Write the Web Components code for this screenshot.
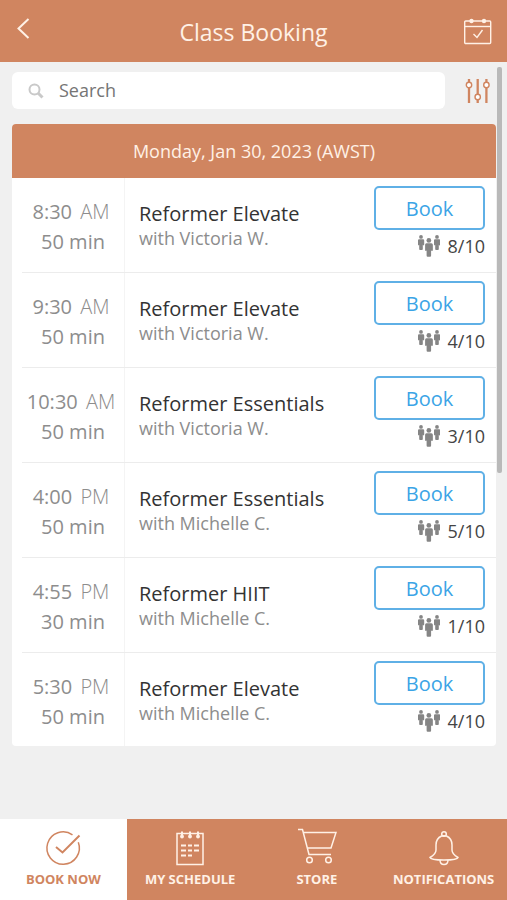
<!DOCTYPE html>
<html lang="en">
<head>
<meta charset="utf-8">
<meta name="viewport" content="width=device-width, initial-scale=1">
<title>Class Booking</title>
<style>
  html, body { margin: 0; }
  body {
    --brand: #d08560;
    --on-brand: #fff1e6;
    --blue: #3ba4e6;
    --grey: #8d8d8d;
    --line: #ececec;
    font-family: "Open Sans", "Noto Sans", sans-serif;
    font-size: 18px;
    color: #333;
    background: #f0f0f0;
  }
</style>
</head>
<body>
<booking-app></booking-app>

<script>
const define = (name, html, setup) => {
  const template = document.createElement('template');
  template.innerHTML = html;
  customElements.define(name, class extends HTMLElement {
    constructor() {
      super();
      this.attachShadow({ mode: 'open' }).append(template.content.cloneNode(true));
    }
    connectedCallback() {
      if (setup) setup(this, this.shadowRoot);
    }
  });
};

define('app-header', `
<style>
  :host { display: block; background: var(--brand); color: var(--on-brand); }
  header { display: grid; grid-template-columns: 56px 1fr 56px; align-items: center; height: 62px; }
  h1 { margin: 0; padding-top: 2px; font-size: 23px; line-height: 32px; font-weight: 400; text-align: center; }
  button { display: flex; align-items: center; height: 58px; padding: 0 14px; border: 0; background: none; color: inherit; }
  .end { justify-content: flex-end; height: 62px; }
  header { align-items: start; }
  h1 { align-self: center; }
  svg { display: block; flex: none; fill: none; stroke: currentColor; }
</style>
<header>
  <button type="button" aria-label="Back">
    <svg width="18" height="24" viewBox="0 0 18 24" stroke-width="2"><path d="M14.500 2 4.500 11.500 14.500 21"/></svg>
  </button>
  <h1><slot></slot></h1>
  <button type="button" class="end" aria-label="Calendar">
    <svg width="30" height="28" viewBox="0 0 30 28" stroke-width="1.400">
      <rect x="1.700" y="4" width="26" height="22.500" rx="1"/><path d="M1.700 9.500h26"/>
      <circle cx="8.500" cy="4" r="2.200" fill="currentColor" stroke="none"/><circle cx="21" cy="4" r="2.200" fill="currentColor" stroke="none"/>
      <path d="m10.500 17 3.500 3.500 5.500-7.500"/>
    </svg>
  </button>
</header>`);

define('search-bar', `
<style>
  :host { display: flex; align-items: center; gap: 16px; }
  label { flex: 1; display: flex; align-items: center; gap: 15px; height: 37px; padding: 0 16px; border-radius: 6px; background: #fff; }
  input { flex: 1; min-width: 0; height: 35px; margin-bottom: 2px; padding: 0; border: 0; outline: 0; background: none; font: inherit; color: inherit; }
  input::placeholder { color: #757575; opacity: 1; }
  button { padding: 0 4px 0 3px; border: 0; background: none; color: var(--brand); }
  svg { display: block; fill: none; stroke: currentColor; }
  .lens { color: #c9c9c9; }
</style>
<label>
  <svg class="lens" width="16" height="16" viewBox="0 0 16 16" stroke-width="2"><circle cx="6.500" cy="6.500" r="5"/><path d="m10 10 4.500 4.500" stroke-width="3"/></svg>
  <input type="text" placeholder="Search" aria-label="Search">
</label>
<button type="button" aria-label="Filters">
  <svg width="28" height="26" viewBox="0 0 28 26" stroke-width="1.400">
    <path d="M5 1v3m0 6v15M13.700 1v15m0 6v3M22.400 1v3m0 6v15" stroke-width="2.300"/>
    <g fill="#fff"><circle cx="5" cy="7" r="2.700"/><circle cx="13.700" cy="19" r="2.700"/><circle cx="22.400" cy="7" r="2.700"/></g>
  </svg>
</button>`);

define('class-card', `
<style>
  :host { display: block; border-radius: 4px; background: #fff; overflow: hidden; }
  h2 { margin: 0; background: var(--brand); color: var(--on-brand); font-size: 18px; line-height: 54px; font-weight: 400; text-align: center; }
</style>
<section><h2><slot name="date"></slot></h2><slot></slot></section>`);

define('class-row', `
<style>
  :host { display: grid; grid-template-columns: 103px 1fr 112px; height: 94px; margin-left: 10px; border-bottom: 1px solid var(--line); }
  :host(:last-child) { height: 93px; border-bottom: 0; }
  .when { display: flex; flex-direction: column; justify-content: center; padding-top: 4px; border-right: 1px solid #f4f4f4; font-size: 20px; line-height: 30px; color: var(--grey); text-align: center; white-space: nowrap; }
  .time-line { padding-right: 4px; }
  .half { margin-left: 3px; font-weight: 300; }
  .what { padding: 22px 0 0 14px; white-space: nowrap; }
  h3 { margin: 0; font-size: 20px; line-height: 28px; font-weight: 400; color: #333; }
  p { margin: 0; font-size: 18px; line-height: 21px; color: var(--grey); }
  .act { padding: 8px 11px 0 0; margin-left: -10px; }
  button { display: block; width: 100%; height: 44px; padding: 0; border: 2px solid #5fb0e6; border-radius: 5px; background: #fff; color: var(--blue); font: inherit; font-size: 20px; }
  .spots { display: flex; justify-content: flex-end; align-items: center; gap: 8px; margin-top: 2px; font-size: 18px; line-height: 28px; color: #444; }
  svg { display: block; fill: #858585; }
</style>
<div class="when"><span class="time-line"><span class="time"></span> <span class="half"></span></span><span class="length"></span></div>
<div class="what"><h3></h3><p></p></div>
<div class="act">
  <button type="button">Book</button>
  <div class="spots">
    <svg width="22" height="22" viewBox="0 0 22 22" aria-hidden="true">
      <defs><g id="p"><circle cx="3" cy="1.900" r="1.900"/><path d="M1 4.200h4q1.200 0 1.200 1.200v4.200q0 .8-.7.800t-.7-.8V14q0 1-.8 1H2q-.8 0-.8-1V9.600q0 .8-.6.800T0 9.600V5.400q0-1.200 1-1.200z"/></g></defs>
      <use href="#p"/><use href="#p" x="16"/>
      <use href="#p" transform="translate(7.100 3) scale(1.250)"/>
    </svg>
    <span class="count"></span>
  </div>
</div>`, (host, root) => {
  const put = (selector, name) => { root.querySelector(selector).textContent = host.getAttribute(name); };
  put('.time', 'time');
  put('.half', 'half');
  put('.length', 'length');
  put('h3', 'name');
  put('.count', 'spots');
  root.querySelector('p').textContent = 'with ' + host.getAttribute('coach');
});

define('nav-tab', `
<style>
  :host { display: block; flex: 1; min-width: 0; }
  a { display: flex; flex-direction: column; align-items: center; gap: 2px; height: 72px; padding-top: 9px; color: var(--on-brand); font-size: 13px; line-height: 18px; font-weight: 700; text-decoration: none; white-space: nowrap; }
  :host([active]) a { background: #fff; color: var(--brand); }
  ::slotted(svg) { display: block; width: 40px; height: 40px; fill: none; stroke: currentColor; stroke-width: 1.500px; }
</style>
<a href="#"><slot name="icon"></slot><span><slot></slot></span></a>`);

define('tab-bar', `
<style>:host { display: block; background: var(--brand); } nav { display: flex; }</style>
<nav aria-label="Main"><slot></slot></nav>`);

define('booking-app', `
<style>
  :host { display: flex; flex-direction: column; min-height: 100vh; }
  main { flex: 1; position: relative; display: flex; flex-direction: column; gap: 15px; padding: 10px 11px 16px 12px; }
  .thumb { position: absolute; top: 5px; right: 5px; width: 5px; height: 406px; border-radius: 2px; background: #b9b9b9; }
</style>
<app-header>Class Booking</app-header>
<main>
  <search-bar></search-bar>
  <class-card>
    <span slot="date">Monday, Jan 30, 2023 (AWST)</span>
    <class-row time="8:30" half="AM" length="50 min" name="Reformer Elevate" coach="Victoria W." spots="8/10"></class-row>
    <class-row time="9:30" half="AM" length="50 min" name="Reformer Elevate" coach="Victoria W." spots="4/10"></class-row>
    <class-row time="10:30" half="AM" length="50 min" name="Reformer Essentials" coach="Victoria W." spots="3/10"></class-row>
    <class-row time="4:00" half="PM" length="50 min" name="Reformer Essentials" coach="Michelle C." spots="5/10"></class-row>
    <class-row time="4:55" half="PM" length="30 min" name="Reformer HIIT" coach="Michelle C." spots="1/10"></class-row>
    <class-row time="5:30" half="PM" length="50 min" name="Reformer Elevate" coach="Michelle C." spots="4/10"></class-row>
  </class-card>
  <div class="thumb"></div>
</main>
<tab-bar>
  <nav-tab active>
    <svg slot="icon" viewBox="0 0 40 40"><path d="M29.500 6.800A16.200 16.200 0 1 0 35.300 14.300"/><path d="m13 19 6.500 5.500L36.500 7.500" stroke-width="2"/></svg>
    BOOK NOW
  </nav-tab>
  <nav-tab>
    <svg slot="icon" viewBox="0 0 40 40"><rect x="7" y="5.500" width="26" height="31"/><g fill="currentColor" stroke="none"><circle cx="12" cy="8.500" r="1.900"/><circle cx="20" cy="8.500" r="1.900"/><circle cx="28" cy="8.500" r="1.900"/></g><path d="M12 3.500v5M20 3.500v5M28 3.500v5" stroke-width="2"/><path d="M11 17.500h5m2 0h4m2 0h5M11 22.500h5m2 0h4m2 0h5M11 27.500h5m2 0h4" stroke-width="2"/></svg>
    MY SCHEDULE
  </nav-tab>
  <nav-tab>
    <svg slot="icon" viewBox="0 0 40 40"><path d="M1 1.500h4.500L12 26.500h22M6 4.500h33L34 20H10"/><circle cx="12.500" cy="32" r="2.800"/><circle cx="31.500" cy="32" r="2.800"/></svg>
    STORE
  </nav-tab>
  <nav-tab>
    <svg slot="icon" viewBox="0 0 40 40"><circle cx="20" cy="6" r="2.300"/><path d="M17.500 8Q12 10.500 12 17v5q0 4-6 7.500Q6.500 32 20 32t14-2.500Q28 26 28 22v-5q0-6.500-5.500-9Q20 7.500 17.500 8zM16 32q0 4.500 4 4.500t4-4.500"/></svg>
    NOTIFICATIONS
  </nav-tab>
</tab-bar>`);
</script>
</body>
</html>
